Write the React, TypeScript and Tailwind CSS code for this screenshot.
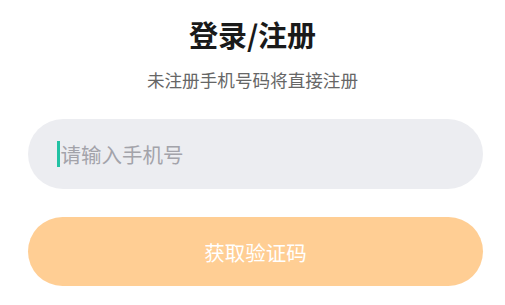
import React from "react";

export default function App() {
  const font = { fontFamily: '"Noto Sans CJK SC", "Noto Sans", sans-serif' };
  return (
    <div className="w-[505px] h-[305px] bg-white overflow-hidden flex flex-col items-center" style={font}>
      <h1 className="mt-[15px] text-[29px] leading-[38px] font-bold text-[#1a1a1a]">登录/注册</h1>
      <p className="mt-[15px] text-[17.6px] leading-[24px] text-[#666666]">未注册手机号码将直接注册</p>
      <div className="mt-[27px] self-start ml-[28px] w-[455px] h-[70px] rounded-full bg-[#ecedf1] flex items-center pl-[29px]">
        <span className="w-[2.5px] h-[26px] bg-[#22c2a4] mr-[1px]" />
        <span className="text-[20.5px] leading-[28px] text-[#a3a3aa]">请输入手机号</span>
      </div>
      <button className="mt-[28px] self-start ml-[28px] w-[455px] h-[69px] rounded-full bg-[#ffce94] text-white text-[20.5px] leading-[28px] flex items-center justify-center">
        获取验证码
      </button>
    </div>
  );
}
